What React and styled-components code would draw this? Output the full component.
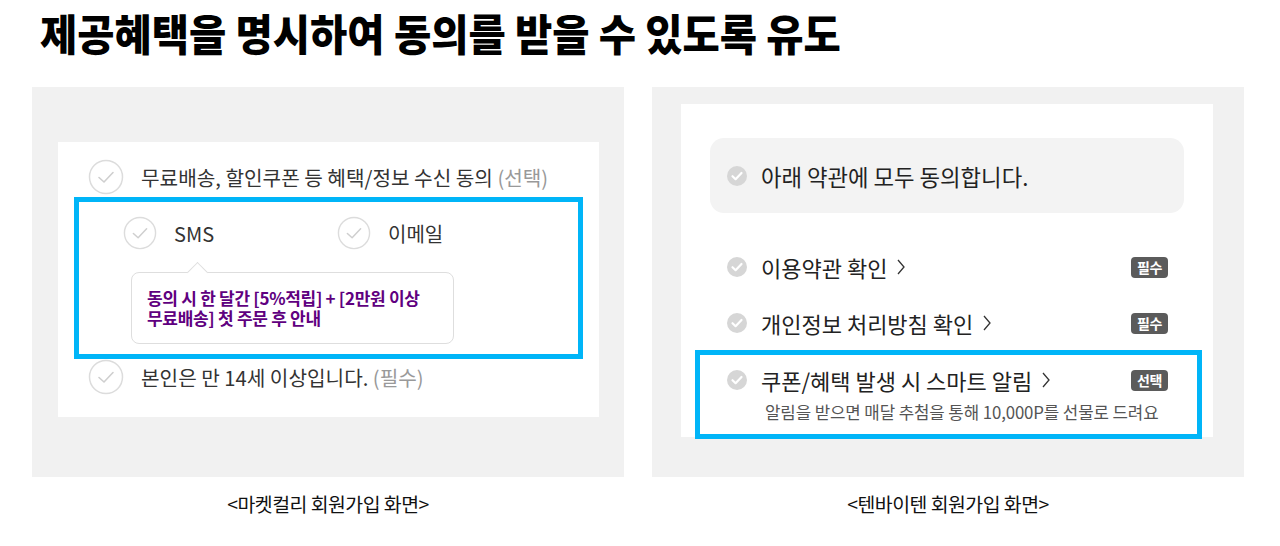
import React from "react";
import styled, { createGlobalStyle } from "styled-components";

const Global = createGlobalStyle`
  html, body { margin: 0; padding: 0; background: #fff; }
  body { font-family: "Noto Sans CJK KR", "Noto Sans", sans-serif; color: #222; }
  * { box-sizing: border-box; }
`;

const Page = styled.div`
  width: 1280px;
  height: 546px;
  padding: 6px 0 0 32px;
  overflow: hidden;
`;

const Title = styled.h1`
  margin: 0 0 0 8px;
  height: 81px;
  font-size: 40.5px;
  line-height: 56px;
  font-weight: 900;
  letter-spacing: 0;
  color: #000;
  transform: scaleY(1.06);
  transform-origin: left center;
`;

const Columns = styled.div`
  display: flex;
  gap: 28px;
`;

const Column = styled.div`
  width: 592px;
  display: flex;
  flex-direction: column;
  align-items: center;
`;

const Panel = styled.div`
  width: 592px;
  height: 390px;
  background: #f1f1f1;
  padding: ${(p) => p.$pad};
`;

const Caption = styled.div`
  margin-top: 15px;
  font-size: 19.4px;
  line-height: 24px;
  color: #111;
  letter-spacing: -0.5px;
`;

/* ---------- left (Kurly) ---------- */
const KurlyCard = styled.div`
  width: 541px;
  height: 275px;
  background: #fff;
  padding: 17px 16px 0;
`;

const KurlyRow = styled.div`
  display: flex;
  align-items: center;
  height: 36px;
  padding-left: 14px;
  gap: 17px;
  font-size: 20.2px;
  color: #333;
  margin-bottom: ${(p) => p.$mb || 0}px;
`;

const Muted = styled.span`
  color: #999;
`;

const Highlight = styled.div`
  border: 5px solid #00b5f8;
  padding: ${(p) => p.$pad};
  width: ${(p) => p.$w}px;
  height: ${(p) => p.$h}px;
  margin: ${(p) => p.$m || 0};
`;

const Options = styled.div`
  display: flex;
  padding-left: 44px;
  height: 36px;
  align-items: center;
`;

const Option = styled.div`
  display: flex;
  align-items: center;
  gap: 17px;
  width: 214px;
  font-size: 20px;
  color: #333;
`;

const Tooltip = styled.div`
  position: relative;
  margin: 21px 0 0 52px;
  width: 323px;
  height: 72px;
  border: 1px solid #dedede;
  border-radius: 8px;
  padding: 15px 15px;
  font-size: 17px;
  line-height: 20px;
  font-weight: 700;
  color: #5f0080;
  letter-spacing: -0.3px;
  white-space: nowrap;
  &::before {
    content: "";
    position: absolute;
    top: -8px;
    left: 58px;
    width: 14px;
    height: 14px;
    background: #fff;
    border-left: 1px solid #dedede;
    border-top: 1px solid #dedede;
    transform: rotate(45deg);
  }
`;

const OutlineCheck = ({ size = 36 }) => (
  <svg width={size} height={size} viewBox="0 0 36 36">
    <circle cx="18" cy="18" r="16.5" fill="#fff" stroke="#dcdcdc" strokeWidth="1.5" />
    <path d="M11 18.5 L16 23 L25 13.5" fill="none" stroke="#cfcfcf" strokeWidth="1.6" strokeLinecap="round" strokeLinejoin="round" />
  </svg>
);

/* ---------- right (Tenbyten) ---------- */
const TenCard = styled.div`
  width: 532px;
  height: 333px;
  background: #fff;
  padding: 34px 29px 0;
`;

const AllAgree = styled.div`
  height: 75px;
  border-radius: 14px;
  background: #f3f3f3;
  display: flex;
  align-items: center;
  padding-left: 17px;
  gap: 14px;
  font-size: 22.3px;
  color: #222;
  margin-bottom: 39px;
`;

const TermRow = styled.div`
  display: flex;
  align-items: center;
  height: 30px;
  padding: ${(p) => p.$pad || "0 16px 0 17px"};
  margin-bottom: ${(p) => p.$mb || 0}px;
`;

const TermLabel = styled.div`
  flex: 1;
  display: flex;
  align-items: center;
  gap: 14px;
  font-size: 22px;
  color: #222;
`;

const Chevron = () => (
  <svg width="10" height="18" viewBox="0 0 10 18" style={{ marginLeft: -5 }}>
    <path d="M2 2 L8 9 L2 16" fill="none" stroke="#333" strokeWidth="1.3" />
  </svg>
);

const Badge = styled.span`
  display: inline-flex;
  align-items: center;
  justify-content: center;
  width: 37px;
  height: 21px;
  border-radius: 4px;
  background: #5b5b5b;
  color: #fff;
  font-size: 14px;
  font-weight: 700;
  letter-spacing: -0.5px;
`;

const SubText = styled.div`
  padding-left: 38px;
  margin-top: 6px;
  font-size: 16.8px;
  line-height: 22px;
  color: #555;
  letter-spacing: -0.1px;
`;

const FilledCheck = () => (
  <svg width="20" height="20" viewBox="0 0 20 20">
    <circle cx="10" cy="10" r="10" fill="#d6d6d6" />
    <path d="M5.5 10.2 L8.6 13.2 L14.5 7" fill="none" stroke="#fff" strokeWidth="2.2" strokeLinecap="round" strokeLinejoin="round" />
  </svg>
);

const terms = [
  { label: "이용약관 확인", badge: "필수", mb: 26 },
  { label: "개인정보 처리방침 확인", badge: "필수", mb: 12 },
];

export default function App() {
  return (
    <>
      <Global />
      <Page>
        <Title>제공혜택을 명시하여 동의를 받을 수 있도록 유도</Title>
        <Columns>
          <Column>
            <Panel $pad="55px 0 0 26px">
              <KurlyCard>
                <KurlyRow $mb={2}>
                  <OutlineCheck />
                  <span>
                    무료배송, 할인쿠폰 등 혜택/정보 수신 동의 <Muted>(선택)</Muted>
                  </span>
                </KurlyRow>
                <Highlight $pad="13px 0 0 0" $w={509} $h={162}>
                  <Options>
                    <Option>
                      <OutlineCheck size={34} />
                      SMS
                    </Option>
                    <Option>
                      <OutlineCheck size={34} />
                      이메일
                    </Option>
                  </Options>
                  <Tooltip>
                    동의 시 한 달간 [5%적립] + [2만원 이상
                    <br />
                    무료배송] 첫 주문 후 안내
                  </Tooltip>
                </Highlight>
                <KurlyRow>
                  <OutlineCheck />
                  <span>
                    본인은 만 14세 이상입니다. <Muted>(필수)</Muted>
                  </span>
                </KurlyRow>
              </KurlyCard>
            </Panel>
            <Caption>&lt;마켓컬리 회원가입 화면&gt;</Caption>
          </Column>
          <Column>
            <Panel $pad="17px 0 0 29px">
              <TenCard>
                <AllAgree>
                  <FilledCheck />
                  아래 약관에 모두 동의합니다.
                </AllAgree>
                {terms.map((t) => (
                  <TermRow key={t.label} $mb={t.mb}>
                    <TermLabel>
                      <FilledCheck />
                      {t.label}
                      <Chevron />
                    </TermLabel>
                    <Badge>{t.badge}</Badge>
                  </TermRow>
                ))}
                <Highlight $pad="10px 29px 0 27px" $w={507} $h={89} $m="0 0 0 -15px">
                  <TermRow $pad="0">
                    <TermLabel>
                      <FilledCheck />
                      쿠폰/혜택 발생 시 스마트 알림
                      <Chevron />
                    </TermLabel>
                    <Badge>선택</Badge>
                  </TermRow>
                  <SubText>알림을 받으면 매달 추첨을 통해 10,000P를 선물로 드려요</SubText>
                </Highlight>
              </TenCard>
            </Panel>
            <Caption>&lt;텐바이텐 회원가입 화면&gt;</Caption>
          </Column>
        </Columns>
      </Page>
    </>
  );
}
